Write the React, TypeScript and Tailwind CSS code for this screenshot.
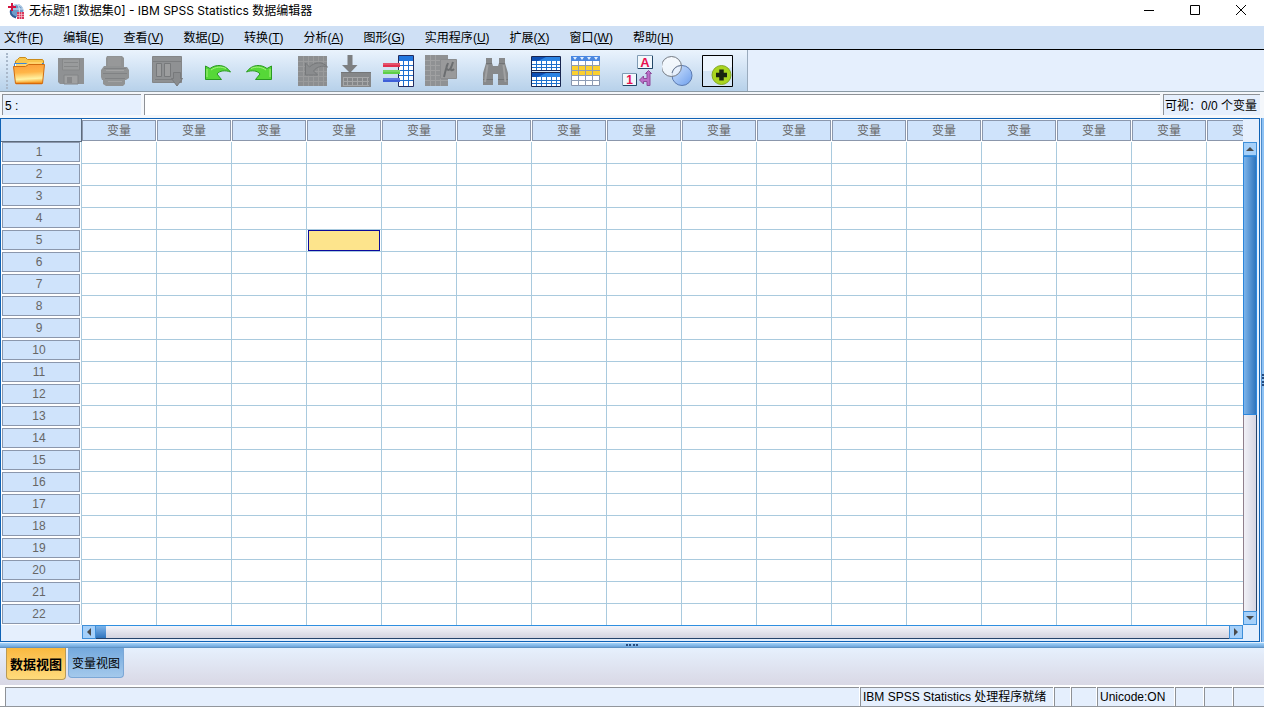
import React, { useState } from 'react';
import clsx from 'clsx';

const MENUS = [
  { label: '文件', key: 'F' },
  { label: '编辑', key: 'E' },
  { label: '查看', key: 'V' },
  { label: '数据', key: 'D' },
  { label: '转换', key: 'T' },
  { label: '分析', key: 'A' },
  { label: '图形', key: 'G' },
  { label: '实用程序', key: 'U' },
  { label: '扩展', key: 'X' },
  { label: '窗口', key: 'W' },
  { label: '帮助', key: 'H' },
];

const ROWS = Array.from({ length: 22 }, (_, i) => i + 1);
const COLS = Array.from({ length: 16 }, (_, i) => i + 1);

const Icon: React.FC<{ children: React.ReactNode }> = ({ children }) => (
  <svg className="block size-8" viewBox="0 0 32 32" aria-hidden="true">
    {children}
  </svg>
);

const LogoIcon = () => (
  <svg className="size-4" viewBox="0 0 16 16" aria-hidden="true">
    <circle cx="9" cy="7.500" r="6.500" fill="#6f9bc8" />
    <path d="M6 2.500c3-2 7-.5 8.500 3M5 6h10M9 1c3 3 3 8 1 12" stroke="#dbe9f6" fill="none" />
    <path d="M3 7c-1 3 0 6 5 7.500" stroke="#2f5c96" strokeWidth="2" fill="none" />
    <path d="M4 0v8M0 4h8" stroke="#d3143f" strokeWidth="2" />
    <path d="M9 9h7v7H9z" fill="#d8385c" />
    <path d="M9 11.500h7M9 13.500h7M11.500 9v7M13.500 9v7" stroke="#f7d5dc" strokeWidth=".6" />
  </svg>
);

const OpenIcon = () => (
  <Icon>
    <defs>
      <linearGradient id="folder" x1="0" y1="0" x2="0.1" y2="1">
        <stop offset="0" stopColor="#fb9f3c" />
        <stop offset=".45" stopColor="#ffb548" />
        <stop offset=".8" stopColor="#fff3a4" />
        <stop offset="1" stopColor="#f9a22c" />
      </linearGradient>
    </defs>
    <path d="M2.500 13V6l2-1.500 2-2h6l2 2h15l1 1.500v7z" fill="#f9c64c" stroke="#c98a1c" />
    <path d="M1.500 13V8.500h29V13" fill="#fff" stroke="#3a86d8" />
    <path d="M3 12V9h10l3-2h13v5" fill="#ffd36a" />
    <path d="M.5 11.500h12l3-2h16L29.500 28.500h-27z" fill="url(#folder)" stroke="#d06c0e" />
    <path d="M3 28.500h26" stroke="#d8690a" strokeWidth="1.500" />
  </Icon>
);

const SaveIcon = () => (
  <Icon>
    <path d="M2 3h26v26H4l-2-2z" fill="#8f9193" />
    <path d="M6.500 4v11h17V4z" fill="#999b9c" stroke="#868889" />
    <path d="M8 7.500h14M8 11.500h14" stroke="#868889" />
    <path d="M8 20h14v9H8z" fill="#9fa0a1" stroke="#828486" />
    <path d="M11 22h5v6h-5z" fill="#88898b" />
  </Icon>
);

const PrintIcon = () => (
  <Icon>
    <path d="M8 1h15l2 2v9h3l2 3v8l-3 2h-1v4l-2 2H7l-3-2v-4H3l-1-3v-7l3-4h2V3z" fill="#919394" />
    <path d="M9 2h13v9H9z" fill="#979899" />
    <path d="M5 13.500h22M4 18.500h24M6 23.500h20" stroke="#808284" />
    <path d="M7 15.500h18M9 26.500h14" stroke="#a3a4a5" />
  </Icon>
);

const RecallIcon = () => (
  <Icon>
    <path d="M1.500 1.500h29v26h-29z" fill="#8f9193" stroke="#848688" />
    <path d="M2 6.500h28M4 24.500h20" stroke="#7c7e80" />
    <path d="M5.500 8.500h5v13h-5zM13.500 8.500h6v13h-6z" fill="#9c9d9e" stroke="#77797b" />
    <path d="M22.500 17.500h7v6h2L26 31l-5.500-7.500h2z" fill="#898b8d" stroke="#77797b" />
  </Icon>
);

const UndoIcon = () => (
  <Icon>
    <path
      d="M2.500 11l4.500 2.500c6-4.500 15-4.500 20.500 3.500-5-2-11-1.500-13.500 2l4.500 5.500h-16z"
      fill="#56d838"
      stroke="#2a9a22"
      strokeLinejoin="round"
    />
    <path d="M4 14v8M8 15c5-3.500 10-3.500 15-1.500" stroke="#a6f27e" fill="none" />
  </Icon>
);

const RedoIcon = () => (
  <Icon>
    <path
      d="M27.500 11L23 13.500c-6-4.500-15-4.500-20.500 3.500 5-2 11-1.500 13.500 2l-4.500 5.500h16z"
      fill="#56d838"
      stroke="#2a9a22"
      strokeLinejoin="round"
    />
    <path d="M26 14v8M22 15c-5-3.500-10-3.500-15-1.500" stroke="#a6f27e" fill="none" />
  </Icon>
);

const GoToCaseIcon = () => (
  <Icon>
    <path d="M2 1h29v30H2z" fill="#8c8e90" />
    <path d="M2 6.500h29M2 11.500h29M2 16.500h29M2 21.500h29M2 26.500h29M7.500 1v30M12.500 1v30M17.500 1v30M22.500 1v30M27.500 1v30" stroke="#9a9b9c" />
    <path d="M9.500 8v12h12l-4-4c3-4 8-6 14-4-5-6-13-5-18 0z" fill="#8a8c8e" stroke="#76787a" />
  </Icon>
);

const GoToVariableIcon = () => (
  <Icon>
    <path d="M8.500 0h5v10h5L11 18 3 10h5.500z" fill="#7d7f81" />
    <path d="M2 17h30v15H2z" fill="#858789" />
    <path d="M4 22.500h26M4 26.500h26M4 30.500h26M8.500 22v9M13.500 22v9M18.500 22v9M23.500 22v9M28.500 22v9M4.500 22v9" stroke="#a6a7a8" />
    <path d="M2 17.500h30" stroke="#747678" />
  </Icon>
);

const VariablesIcon = () => (
  <Icon>
    <path d="M16.500.5h15v31h-15z" fill="#fff" stroke="#232c5e" />
    <path d="M17 1h14v5H17z" fill="#2177e0" />
    <path d="M17 10.500h14M17 15.500h14M17 20.500h14M17 25.500h14M21.500 6v25M26.500 6v25" stroke="#1d6fd0" />
    <path d="M1 8h17v4H1z" fill="#e0304e" />
    <path d="M1 15h17v4H1z" fill="#5fd048" />
    <path d="M1 23h17v4H1z" fill="#3e5fd8" />
    <path d="M1 9h17M1 16h17M1 24h17" stroke="#fff" strokeOpacity=".35" />
  </Icon>
);

const DescriptivesIcon = () => (
  <Icon>
    <path d="M0 0h23v31H0z" fill="#8f9193" />
    <path d="M0 5.500h23M0 10.500h23M0 15.500h23M0 20.500h23M0 25.500h23M5.500 0v31M10.500 0v31M15.500 5v26" stroke="#a0a1a2" />
    <path d="M15.500 4.500h16v19h-16z" fill="#999a9b" stroke="#8a8c8e" />
    <path d="M19 22c1-5 2-9 4-14M22 10c-2 6 3 7 5 0l1-3m-2 5c-1 4 1 4 3 2" stroke="#6b6e70" strokeWidth="2" fill="none" />
  </Icon>
);

const FindIcon = () => (
  <Icon>
    <path d="M9 3h6v5l1 3h5l1-3V3h6v5l3 10v12H21V19h-5v11H6V18l3-10z" fill="#87898b" />
    <path d="M9 8.500h6M22 8.500h6M6 24.500h10M21 24.500h10" stroke="#727476" />
    <path d="M10.500 10L8 27M26.500 10l2 17" stroke="#a0a1a2" strokeWidth="2" />
  </Icon>
);

const SplitFileIcon = () => (
  <Icon>
    <path d="M2.500 1.500h29v30h-29z" fill="#fff" stroke="#182650" />
    <path d="M3 2h28v4H3zM3 18h28v4H3z" fill="#2a83e3" />
    <path d="M3 2h14l-8 4H3zM3 18h14l-8 4H3z" fill="#0d4fb4" />
    <path d="M2 15.500h30M2 17.500h30" stroke="#182650" />
    <path d="M3 16.500h28" stroke="#cfe0f2" />
    <path d="M3 9.500h28M3 12.500h28M3 25.500h28M3 28.500h28M7.500 6v9M12.500 6v9M17.500 6v9M22.500 6v9M27.500 6v9M7.500 22v9M12.500 22v9M17.500 22v9M22.500 22v9M27.500 22v9" stroke="#1d70cd" />
  </Icon>
);

const SelectCasesIcon = () => (
  <Icon>
    <path d="M1.500 1.500h28v29h-28z" fill="#fff" stroke="#8694ad" />
    <path d="M1 1h29v5H1z" fill="#4a87e0" />
    <path d="M3 2h4l-2 3zM10 2h4l-2 3zM17 2h4l-2 3zM24 2h4l-2 3z" fill="#e2efff" />
    <path d="M2 11h28v9H2z" fill="#fbd02f" />
    <path d="M1 10.500h29M1 15.500h29M1 20.500h29M1 25.500h29M8.500 6v25M15.500 6v25M22.500 6v25" stroke="#8d9cb5" />
  </Icon>
);

const ValueLabelsIcon = () => (
  <Icon>
    <path d="M15.500.5h15v13h-15zM.5 18.500h14v12H.5z" fill="#f2f8fd" stroke="#809cb4" />
    <path d="M30.500 1v12.500H16M14.500 19v11.500H1" stroke="#234767" fill="none" />
    <text x="23" y="12" textAnchor="middle" fontFamily="Liberation Sans" fontWeight="bold" fontSize="13" fill="#e8104e">A</text>
    <text x="7.500" y="29" textAnchor="middle" fontFamily="Liberation Sans" fontWeight="bold" fontSize="12" fill="#e8104e">1</text>
    <path d="M23.500 18.500l3-3 3 3h-1.500v12h-3v-4h-3.500v2.500l-4-4 4-4v2.500H25v-5z" fill="#bd70c9" stroke="#8d4b9a" strokeLinejoin="round" />
  </Icon>
);

const VariableSetsIcon = () => (
  <Icon>
    <defs>
      <linearGradient id="set" x1="0" y1="0" x2="1" y2="1">
        <stop offset="0" stopColor="#d2e5fd" />
        <stop offset="1" stopColor="#6d9eed" />
      </linearGradient>
    </defs>
    <circle cx="20" cy="20.500" r="10" fill="url(#set)" stroke="#5b7ab0" />
    <circle cx="9.500" cy="11.500" r="10" fill="#fff" fillOpacity=".65" stroke="#737982" />
    <path d="M10 18a10 10 0 0 1 9-7.500" stroke="#65758e" fill="none" />
  </Icon>
);

const ExtensionIcon = () => (
  <Icon>
    <path d="M.5.5h30v31H.5z" fill="#d3e4f5" stroke="#000" />
    <path d="M1 1h29v11c-8 3-19 4-29 4z" fill="#edf5fd" />
    <circle cx="19.500" cy="20" r="9.500" fill="#a9d51f" stroke="#84a827" />
    <path d="M19.500 14.500v11M14 20h11" stroke="#1b2410" strokeWidth="4.500" />
  </Icon>
);

const TOOL_GROUPS = [
  [
    { title: '打开数据文档', icon: OpenIcon },
    { title: '保存此文档', icon: SaveIcon },
    { title: '打印', icon: PrintIcon },
  ],
  [{ title: '重新调用最近使用的对话框', icon: RecallIcon }],
  [
    { title: '撤销', icon: UndoIcon },
    { title: '重做', icon: RedoIcon },
  ],
  [
    { title: '转到个案', icon: GoToCaseIcon },
    { title: '转到变量', icon: GoToVariableIcon },
    { title: '变量', icon: VariablesIcon },
    { title: '运行描述统计', icon: DescriptivesIcon },
  ],
  [{ title: '查找', icon: FindIcon }],
  [
    { title: '拆分文件', icon: SplitFileIcon },
    { title: '选择个案', icon: SelectCasesIcon },
  ],
  [
    { title: '值标签', icon: ValueLabelsIcon },
    { title: '使用变量集', icon: VariableSetsIcon },
    { title: '定制工具栏', icon: ExtensionIcon },
  ],
];

const GROUP_GAPS = ['gap-[11px]', 'gap-0', 'gap-[9px]', 'gap-[11px]', 'gap-0', 'gap-[9px]', 'gap-2'];

const TitleBar = () => (
  <header className="flex h-[26px] shrink-0 items-start bg-white pl-2 font-['Inter','Noto_Sans_CJK_SC',sans-serif] text-xs">
    <div className="flex h-[22px] flex-1 items-center gap-[5px]">
      <LogoIcon />
      <h1>无标题1 [数据集0] - IBM SPSS Statistics 数据编辑器</h1>
    </div>
    {[
      { name: '最小化', d: 'M0 5.500h10' },
      { name: '最大化', d: 'M.5.5h9v9h-9z' },
      { name: '关闭', d: 'M0 0l10 10M10 0L0 10' },
    ].map((b) => (
      <button key={b.name} aria-label={b.name} className="flex h-5 w-[46px] items-center justify-center">
        <svg className="size-[10px]" viewBox="0 0 10 10" fill="none" stroke="#000">
          <path d={b.d} />
        </svg>
      </button>
    ))}
  </header>
);

const MenuBar = () => (
  <nav className="flex h-6 shrink-0 items-center gap-5 border-b border-black bg-[#cfe0f5] pl-1">
    {MENUS.map((m) => (
      <button key={m.key} className="whitespace-nowrap">
        {m.label}(<u>{m.key}</u>)
      </button>
    ))}
  </nav>
);

const ToolBar = () => (
  <div className="flex shrink-0 border-b border-[#8b9aa5]">
    <div className="flex h-[41px] items-center gap-5 border-r border-[#9aabbd] bg-linear-to-b from-[#eaf3fd] to-[#b7d1ea] pr-[13px]">
      <div className="-mr-5 flex h-9 w-[13px] justify-center">
        <span className="border-l-2 border-dotted border-[#a9b8ca]" />
      </div>
      {TOOL_GROUPS.map((group, i) => (
        <div key={i} className={clsx('flex', GROUP_GAPS[i])}>
          {group.map(({ title, icon: ToolIcon }) => (
            <button key={title} title={title} aria-label={title}>
              <ToolIcon />
            </button>
          ))}
        </div>
      ))}
    </div>
  </div>
);

const CellEditor = () => (
  <div className="flex h-[26px] shrink-0 gap-[3px] bg-[#f4f7fb] pt-[2px] pr-1 pb-[3px] pl-[2px]">
    <input
      aria-label="单元格"
      readOnly
      value="5 :"
      className="w-[139px] border-t border-l border-[#8e9196] bg-[#e5effd] pt-px pl-[2px] outline-none"
    />
    <input aria-label="值" className="min-w-0 flex-1 border-t border-l border-[#8e9196] bg-white px-1 outline-none" />
    <div className="flex w-[97px] items-center border-t border-l border-[#8e9196] bg-[#e5effd] pt-px pl-px whitespace-nowrap">
      可视：0/0 个变量
    </div>
  </div>
);

const DataGrid: React.FC = () => {
  const [active, setActive] = useState({ row: 5, col: 4 });

  return (
    <div className="min-w-0 flex-1 overflow-hidden bg-white">
      <table className="w-[1281px] table-fixed border-separate border-spacing-0">
        <colgroup>
          <col className="w-[81px]" />
          {COLS.map((c) => (
            <col key={c} className="w-[75px]" />
          ))}
        </colgroup>
        <thead>
          <tr className="h-[23px]">
            <th className="border-r border-b border-[#5d6b7c] bg-[#cfe3fb] p-0" />
            {COLS.map((c) => (
              <th key={c} scope="col" className="py-px pr-px pl-0 font-normal text-[#666]">
                <div className="h-[21px] border border-[#8b97ac] bg-[#cfe3fb] leading-[21px]">变量</div>
              </th>
            ))}
          </tr>
        </thead>
        <tbody>
          {ROWS.map((r) => (
            <tr key={r} className="h-[22px]">
              <th scope="row" className="border-r border-[#a9cade] bg-white pt-0 pr-px pb-[2px] pl-px font-normal text-[#666]">
                <div className="h-5 border border-[#8b97ac] bg-[#cfe3fb] pr-1 leading-[19px]">{r}</div>
              </th>
              {COLS.map((c) => (
                <td
                  key={c}
                  onClick={() => setActive({ row: r, col: c })}
                  className="border-r border-b border-[#a9cade] p-0"
                >
                  {active.row === r && active.col === c && (
                    <div className="mx-px h-[21px] border border-[#0a0a9c] bg-[#fde48c]" />
                  )}
                </td>
              ))}
            </tr>
          ))}
        </tbody>
      </table>
    </div>
  );
};

const ScrollButton: React.FC<{ label: string; d: string }> = ({ label, d }) => (
  <button
    aria-label={label}
    className="flex size-[14px] shrink-0 items-center justify-center border border-[#3f8fd8] bg-[#a5d0fa]"
  >
    <svg className="size-2" viewBox="0 0 8 8" fill="#4a4a4a">
      <path d={d} />
    </svg>
  </button>
);

const VerticalScroll = () => (
  <div className="flex w-[14px] flex-col pt-[23px]">
    <ScrollButton label="向上" d="M0 6l4-4 4 4z" />
    <div className="flex-1 border-r border-l border-r-[#24436b] border-l-[#8f7f8c] bg-linear-to-r from-[#f1f1f7] to-[#d5d5e2]">
      <div className="-mx-px h-[57%] border border-[#2c86dc] bg-linear-to-r from-[#7db4ea] to-[#2e74bd]" />
    </div>
    <ScrollButton label="向下" d="M0 2l4 4 4-4z" />
  </div>
);

const HorizontalScroll = () => (
  <div className="mr-4 ml-[81px] flex h-[14px] shrink-0">
    <ScrollButton label="向左" d="M6 0L2 4l4 4z" />
    <div className="flex-1 border-t border-b border-t-[#2f8fe0] border-b-[#24436b] bg-linear-to-b from-[#f4f4f9] to-[#d3d3df]">
      <div className="h-full w-[10px] bg-linear-to-b from-[#7db4ea] to-[#2e74bd]" />
    </div>
    <ScrollButton label="向右" d="M2 0l4 4-4 4z" />
  </div>
);

const ViewTabs: React.FC = () => {
  const [view, setView] = useState('data');

  return (
    <div className="flex h-[37px] shrink-0 items-start gap-[2px] bg-linear-to-b from-[#e6f0fd] to-[#d9d8e5] pl-[6px]">
      {[
        { id: 'data', label: '数据视图' },
        { id: 'variable', label: '变量视图' },
      ].map((t) => (
        <button
          key={t.id}
          onClick={() => setView(t.id)}
          className={clsx(
            'rounded-b border border-t-0 pt-[2px] whitespace-nowrap',
            view === t.id
              ? 'h-8 w-[60px] border-[#b99a55] bg-linear-to-b from-[#f9b93f] to-[#ffdb7b] text-[13px] font-bold'
              : 'h-[30px] w-14 border-[#7ba7d6] bg-linear-to-b from-[#74a9dd] to-[#a4c9ec]'
          )}
        >
          {t.label}
        </button>
      ))}
    </div>
  );
};

const StatusBar = () => (
  <footer className="flex h-[22px] shrink-0 gap-px border-t-2 border-b border-t-white border-b-[#92969c] bg-white pl-[5px] [&>div]:flex [&>div]:items-center [&>div]:border-t [&>div]:border-l [&>div]:border-[#8e9196] [&>div]:bg-[#e5effd] [&>div]:pl-[2px] [&>div]:whitespace-nowrap">
    <div className="flex-1" />
    <div className="w-[193px]">IBM SPSS Statistics 处理程序就绪</div>
    <div className="w-4" />
    <div className="w-[25px]" />
    <div className="w-[77px]">Unicode:ON</div>
    <div className="w-7" />
    <div className="w-7" />
    <div className="w-[31px]" />
  </footer>
);

const App: React.FC = () => {
  return (
    <div className="flex h-screen flex-col overflow-hidden bg-[#e5effd] font-['Liberation_Sans','Noto_Sans_CJK_SC',sans-serif] text-xs text-black">
      <TitleBar />
      <MenuBar />
      <ToolBar />
      <CellEditor />
      <main className="flex min-h-0 flex-1">
        <section className="flex min-w-0 flex-1 flex-col border border-[#0f62b5] pb-[2px]">
          <div className="flex min-h-0 flex-1 pr-[2px]">
            <DataGrid />
            <VerticalScroll />
          </div>
          <HorizontalScroll />
        </section>
        <div className="ml-px flex w-[3px] items-center border-l border-[#4c8bcb] bg-[#8fc3f5]">
          <span className="h-3 border-l-2 border-dotted border-[#274b7e]" />
        </div>
      </main>
      <div className="mt-px flex h-[5px] shrink-0 items-center justify-center border-b border-[#5f93c4] bg-linear-to-b from-[#a3d4fb] to-[#6ea4da]">
        <span className="w-3 border-t-2 border-dotted border-[#274b7e]" />
      </div>
      <ViewTabs />
      <StatusBar />
    </div>
  );
};

export default App;
